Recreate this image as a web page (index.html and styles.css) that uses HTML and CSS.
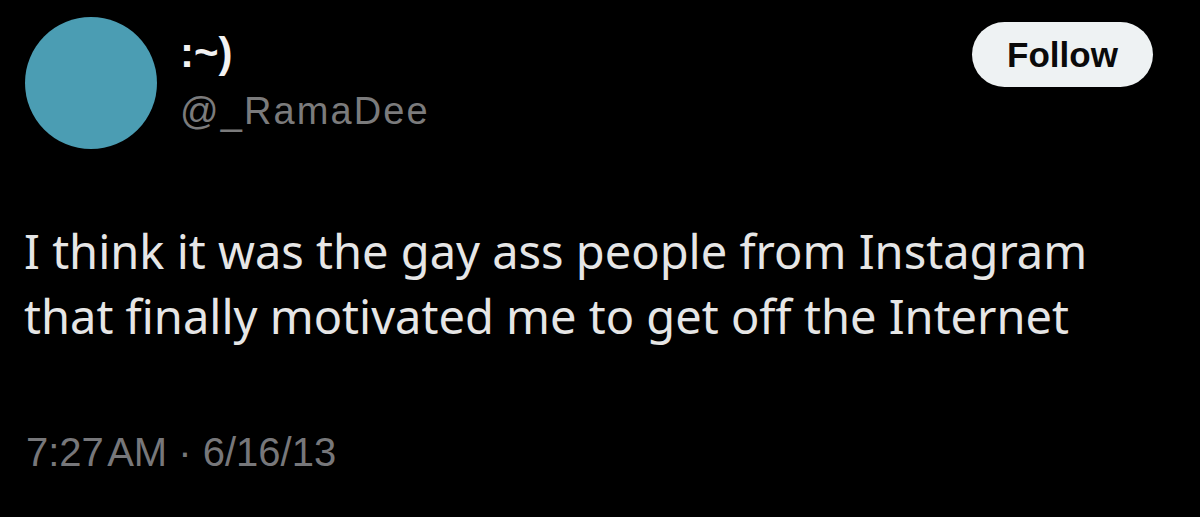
FILE: index.html
```html
<!DOCTYPE html>
<html>
<head>
<meta charset="utf-8">
<link rel="stylesheet" href="styles.css">
</head>
<body>
<div class="tweet">
  <div class="header">
    <div class="avatar"></div>
    <div class="names">
      <div class="name">:~)</div>
      <div class="handle">@_RamaDee</div>
    </div>
    <button class="follow">Follow</button>
  </div>
  <p class="text">I think it was the gay ass people from Instagram<br>that finally motivated me to get off the Internet</p>
  <div class="meta">7:27&#8202;AM · 6/16/13</div>
</div>
</body>
</html>
```
FILE: styles.css
```css
html, body {
  margin: 0;
  padding: 0;
  background: #000;
}
.tweet {
  width: 1200px;
  height: 517px;
  box-sizing: border-box;
  padding: 17px 47px 0 25px;
  font-family: "Liberation Sans", Arial, sans-serif;
}
.header {
  display: flex;
  align-items: flex-start;
}
.avatar {
  width: 132px;
  height: 132px;
  border-radius: 50%;
  background: #4b9db3;
  flex-shrink: 0;
}
.names {
  flex: 1;
  margin-left: 23px;
  padding-top: 14px;
}
.name {
  color: #f2f2f2;
  font-weight: bold;
  font-size: 42px;
  line-height: 44px;
}
.handle {
  margin-top: 14px;
  color: #7b7b7c;
  font-size: 38px;
  line-height: 44px;
  letter-spacing: 2.1px;
}
.follow {
  margin-top: 5px;
  width: 181px;
  height: 65px;
  border: none;
  border-radius: 33px;
  background: #eef2f3;
  color: #0a0a0a;
  font-family: "Liberation Sans", Arial, sans-serif;
  font-weight: bold;
  font-size: 35px;
  padding: 0;
}
.text {
  margin: 70px 0 0 -1px;
  color: #e6e6e6;
  font-family: "Noto Sans", sans-serif;
  font-size: 47px;
  line-height: 65px;
}
.meta {
  margin-top: 81px;
  margin-left: 1px;
  color: #77777a;
  font-size: 40px;
  line-height: 44px;
}
```
